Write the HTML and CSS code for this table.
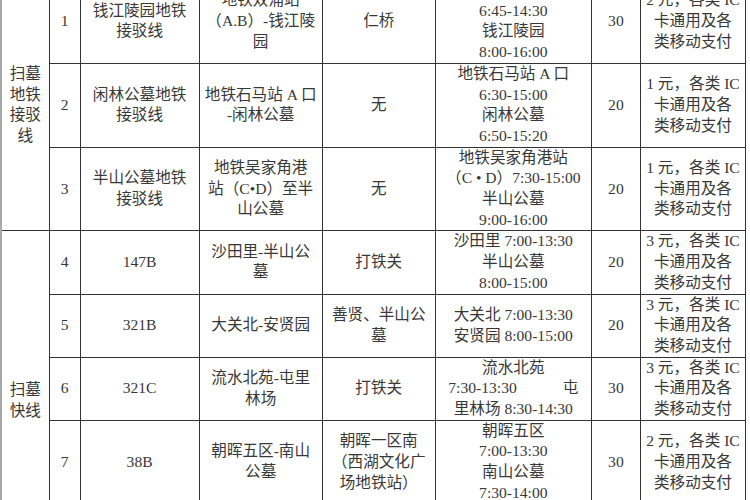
FILE: index.html
```html
<!DOCTYPE html>
<html lang="zh-CN">
<head>
<meta charset="utf-8">
<title>扫墓专线</title>
<link rel="stylesheet" href="styles.css">
</head>
<body>
<table class="sched">
<colgroup>
<col class="c-group"><col class="c-num"><col class="c-name"><col class="c-route"><col class="c-stops"><col class="c-time"><col class="c-int"><col class="c-fee">
</colgroup>
<tbody>
<tr class="r4">
<td class="group" rowspan="3">扫墓<br>地铁<br>接驳<br>线</td>
<td>1</td>
<td>钱江陵园地铁<br>接驳线</td>
<td>地铁双浦站<br>（A.B）-钱江陵<br>园</td>
<td>仁桥</td>
<td>地铁双浦站<br>6:45-14:30<br>钱江陵园<br>8:00-16:00</td>
<td>30</td>
<td>2 元，各类 IC<br>卡通用及各<br>类移动支付</td>
</tr>
<tr class="r4">
<td>2</td>
<td>闲林公墓地铁<br>接驳线</td>
<td>地铁石马站 A 口<br>-闲林公墓</td>
<td>无</td>
<td>地铁石马站 A 口<br>6:30-15:00<br>闲林公墓<br>6:50-15:20</td>
<td>20</td>
<td>1 元，各类 IC<br>卡通用及各<br>类移动支付</td>
</tr>
<tr class="r4">
<td>3</td>
<td>半山公墓地铁<br>接驳线</td>
<td>地铁吴家角港<br>站（C•D）至半<br>山公墓</td>
<td>无</td>
<td>地铁吴家角港站<br>（C • D）7:30-15:00<br>半山公墓<br>9:00-16:00</td>
<td>20</td>
<td>1 元，各类 IC<br>卡通用及各<br>类移动支付</td>
</tr>
<tr class="r3">
<td class="group group-fast" rowspan="4">扫墓<br>快线</td>
<td>4</td>
<td>147B</td>
<td>沙田里-半山公<br>墓</td>
<td>打铁关</td>
<td>沙田里 7:00-13:30<br>半山公墓<br>8:00-15:00</td>
<td>20</td>
<td>3 元，各类 IC<br>卡通用及各<br>类移动支付</td>
</tr>
<tr class="r3">
<td>5</td>
<td>321B</td>
<td>大关北-安贤园</td>
<td>善贤、半山公<br>墓</td>
<td>大关北 7:00-13:30<br>安贤园 8:00-15:00</td>
<td>20</td>
<td>3 元，各类 IC<br>卡通用及各<br>类移动支付</td>
</tr>
<tr class="r3">
<td>6</td>
<td>321C</td>
<td>流水北苑-屯里<br>林场</td>
<td>打铁关</td>
<td>流水北苑<br><span class="split"><span>7:30-13:30</span><span>屯</span></span>里林场 8:30-14:30</td>
<td>30</td>
<td>3 元，各类 IC<br>卡通用及各<br>类移动支付</td>
</tr>
<tr class="r4">
<td>7</td>
<td>38B</td>
<td>朝晖五区-南山<br>公墓</td>
<td>朝晖一区南<br>（西湖文化广<br>场地铁站）</td>
<td>朝晖五区<br>7:00-13:30<br>南山公墓<br>7:30-14:00</td>
<td>30</td>
<td>2 元，各类 IC<br>卡通用及各<br>类移动支付</td>
</tr>
</tbody>
</table>
</body>
</html>
```

FILE: styles.css
```css
html, body {
  margin: 0;
  padding: 0;
  background: #fff;
}

body {
  width: 750px;
  height: 500px;
  overflow: hidden;
}

.sched {
  border-collapse: collapse;
  table-layout: fixed;
  width: 746px;
  margin-top: -21px;
  border-left: 2px solid #a8a8a8;
  font-family: "Liberation Serif", "Noto Sans CJK SC", serif;
  font-size: 15.6px;
  line-height: 20.7px;
  color: #383838;
}

.c-group { width: 48px; }
.c-num { width: 31px; }
.c-name { width: 119px; }
.c-route { width: 123px; }
.c-stops { width: 113px; }
.c-time { width: 156px; }
.c-int { width: 49px; }
.c-fee { width: 105px; }

.sched td {
  border: 1px solid #333;
  padding: 0;
  text-align: center;
  vertical-align: middle;
  white-space: nowrap;
  overflow: hidden;
}

.sched td.group {
  border-left: 2px solid #a8a8a8;
}

.r4 { height: 83px; }
.r3 { height: 63px; }

.sched td.group-fast {
  padding-top: 66px;
}

.split {
  display: flex;
  justify-content: space-between;
  width: 130px;
  margin: 0 auto;
}
```
